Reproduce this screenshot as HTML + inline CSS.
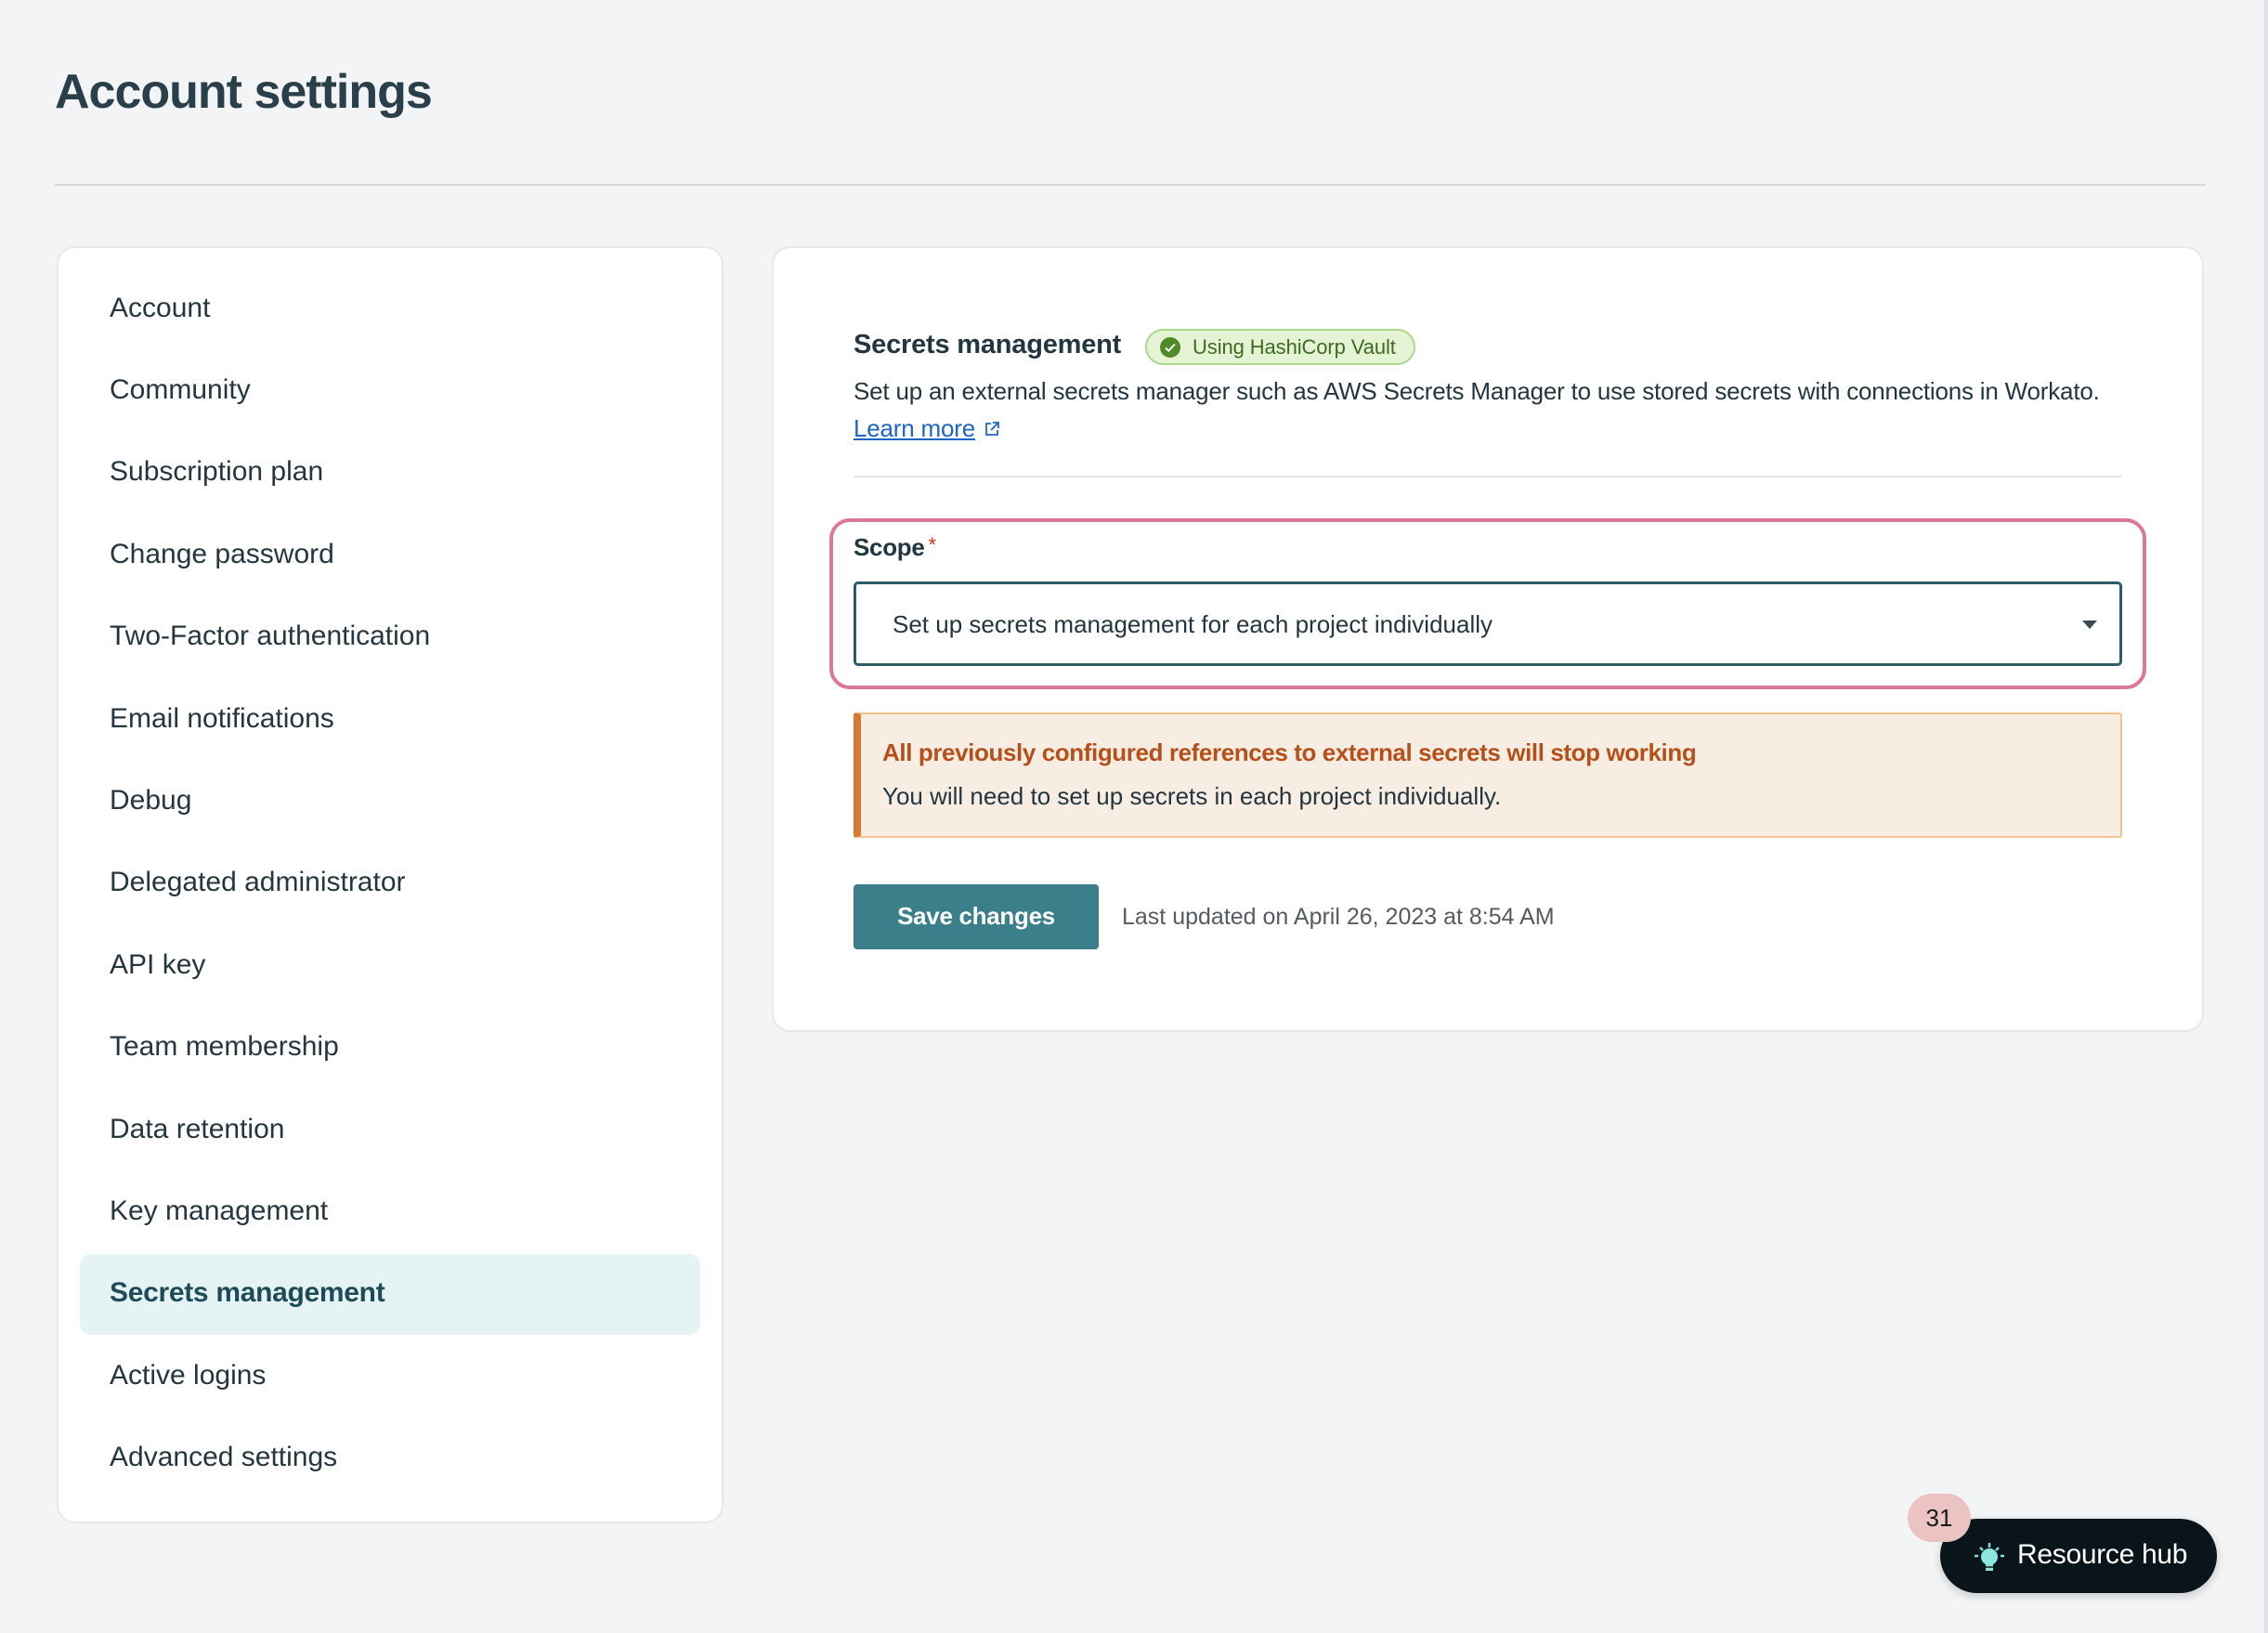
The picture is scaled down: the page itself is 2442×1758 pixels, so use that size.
<!DOCTYPE html>
<html><head><meta charset="utf-8"><style>
*{box-sizing:border-box;margin:0;padding:0}
body{width:2442px;height:1758px;background:#f3f4f6;font-family:"Liberation Sans",sans-serif;color:#23363f;position:relative;overflow:hidden}
.abs{position:absolute}
h1{position:absolute;left:59px;top:69px;font-size:52px;font-weight:bold;color:#2b3f4b;letter-spacing:-1px;white-space:nowrap}
.hr{left:59px;top:198px;width:2316px;height:2px;background:#d4d7dc}
.side{left:61px;top:265px;width:718px;height:1375px;background:#fff;border:2px solid #e6e8eb;border-radius:20px}
.nav{position:absolute;left:57px;font-size:30px;color:#26363f;letter-spacing:0px;line-height:36px;white-space:nowrap}
.active{left:86px;top:1350px;width:668px;height:87px;background:#e5f3f4;border-radius:12px}
.main{left:831px;top:265px;width:1542px;height:846px;background:#fff;border:2px solid #e6e8eb;border-radius:20px}
.t{position:absolute;white-space:nowrap}
</style></head><body>
<h1>Account settings</h1>
<div class="abs hr"></div>
<div class="abs side"></div>
<div class="abs active"></div>
<div class="abs" style="left:61px;top:265px">
<div class="nav" style="top:49px">Account</div>
<div class="nav" style="top:137px">Community</div>
<div class="nav" style="top:225px">Subscription plan</div>
<div class="nav" style="top:314px">Change password</div>
<div class="nav" style="top:402px">Two-Factor authentication</div>
<div class="nav" style="top:491px">Email notifications</div>
<div class="nav" style="top:579px">Debug</div>
<div class="nav" style="top:667px">Delegated administrator</div>
<div class="nav" style="top:756px">API key</div>
<div class="nav" style="top:844px">Team membership</div>
<div class="nav" style="top:933px">Data retention</div>
<div class="nav" style="top:1021px">Key management</div>
<div class="nav" style="top:1109px;font-weight:bold;color:#1d4c58;letter-spacing:-0.3px">Secrets management</div>
<div class="nav" style="top:1198px">Active logins</div>
<div class="nav" style="top:1286px">Advanced settings</div>
</div>
<div class="abs main"></div>
<div class="t" style="left:919px;top:355px;font-size:29px;font-weight:bold;color:#23363f;letter-spacing:-0.2px">Secrets management</div>
<div class="abs" style="left:1233px;top:354px;width:291px;height:39px;background:#e3f3d4;border:2px solid #a9d98a;border-radius:20px"></div>
<svg class="abs" style="left:1248px;top:362px" width="24" height="24" viewBox="0 0 24 24"><circle cx="12" cy="12" r="11" fill="#4f8a2a"/><path d="M7 12.5l3.2 3.2L17 8.5" stroke="#fff" stroke-width="2" fill="none"/></svg>
<div class="t" style="left:1284px;top:361px;font-size:22px;color:#3d6b22;letter-spacing:-0.1px">Using HashiCorp Vault</div>
<div class="t" style="left:919px;top:406px;font-size:26px;color:#23363f;letter-spacing:-0.2px">Set up an external secrets manager such as AWS Secrets Manager to use stored secrets with connections in Workato.</div>
<div class="t" style="left:919px;top:446px;font-size:26px;color:#1f66c4;text-decoration:underline;letter-spacing:-0.2px">Learn more</div>
<svg class="abs" style="left:1058px;top:452px" width="20" height="20" viewBox="0 0 20 20"><path d="M9 4H4v12h12v-5M11 3h6v6M17 3l-8 8" stroke="#1f66c4" stroke-width="1.8" fill="none"/></svg>
<div class="abs" style="left:919px;top:512px;width:1366px;height:2px;background:#e4e7ea"></div>
<div class="abs" style="left:893px;top:558px;width:1418px;height:184px;border:4px solid #d9789b;border-radius:22px"></div>
<div class="t" style="left:919px;top:574px;font-size:26px;font-weight:bold;color:#23363f;letter-spacing:-0.3px">Scope<span style="color:#d0351f;font-weight:normal;font-size:22px;vertical-align:top;margin-left:4px">*</span></div>
<div class="abs" style="left:919px;top:626px;width:1366px;height:91px;border:3px solid #2c5d66;border-radius:5px;background:#fff"></div>
<div class="t" style="left:961px;top:657px;font-size:26px;color:#23363f;letter-spacing:0px">Set up secrets management for each project individually</div>
<svg class="abs" style="left:2240px;top:666px" width="20" height="12"><path d="M2 2h16l-8 9z" fill="#3a4a52"/></svg>
<div class="abs" style="left:919px;top:767px;width:1366px;height:135px;background:#f8ede2;border:2px solid #f0c391;border-left:8px solid #d9782e;border-radius:3px"></div>
<div class="t" style="left:950px;top:795px;font-size:26px;font-weight:bold;color:#b5501a;letter-spacing:-0.4px">All previously configured references to external secrets will stop working</div>
<div class="t" style="left:950px;top:842px;font-size:26px;color:#23363f;letter-spacing:0px">You will need to set up secrets in each project individually.</div>
<div class="abs" style="left:919px;top:952px;width:264px;height:70px;background:#3b7f8a;border-radius:4px"></div>
<div class="t" style="left:919px;top:971px;width:264px;text-align:center;font-size:26px;font-weight:bold;color:#fff;letter-spacing:-0.3px">Save changes</div>
<div class="t" style="left:1208px;top:973px;font-size:25px;color:#555c61;letter-spacing:0px">Last updated on April 26, 2023 at 8:54 AM</div>
<div class="abs" style="left:2089px;top:1635px;width:298px;height:80px;background:#09151a;border-radius:40px;box-shadow:0 3px 10px rgba(0,0,0,.2)"></div>
<svg class="abs" style="left:2122px;top:1656px" width="40" height="40" viewBox="0 0 40 40"><path d="M20 5v5M10 10l3 3M30 10l-3 3M4 19h4M32 19h4" stroke="#7de0d6" stroke-width="2.5"/><circle cx="20" cy="20" r="9" fill="#8ce8df"/><rect x="16" y="26" width="8" height="9" fill="#8ce8df"/><path d="M16 31h8" stroke="#09151a" stroke-width="1.5"/></svg>
<div class="t" style="left:2172px;top:1657px;font-size:30px;color:#fff;letter-spacing:-0.3px">Resource hub</div>
<div class="abs" style="left:2054px;top:1608px;width:68px;height:52px;background:#ecc3c3;border-radius:26px;text-align:center;line-height:52px;font-size:26px;color:#1a1a1a">31</div>
<div class="abs" style="left:2438px;top:0;width:4px;height:1758px;background:#e0e2e5"></div>
</body></html>
